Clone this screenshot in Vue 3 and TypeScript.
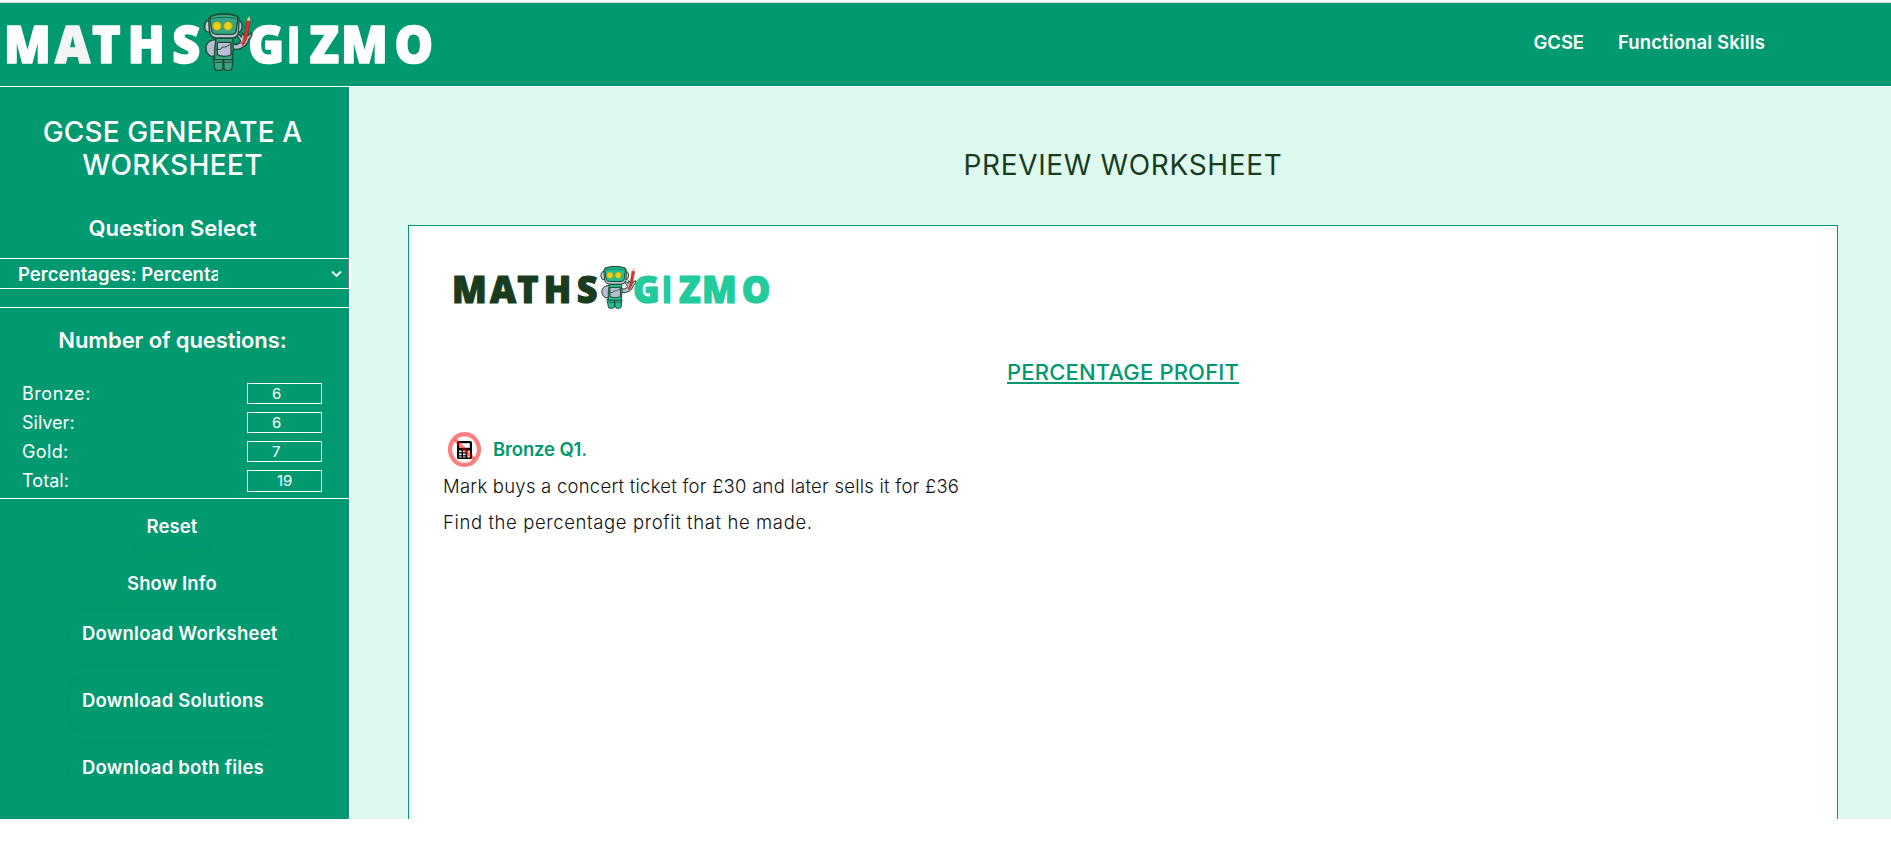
<script setup lang="ts">
import { computed, reactive } from 'vue'

interface Level {
  name: string
  count: number
  cls: string
}

const navLinks = [
  { label: 'GCSE', cls: 'nav-gcse' },
  { label: 'Functional Skills', cls: 'nav-skills' },
]

const levels = reactive<Level[]>([
  { name: 'Bronze:', count: 6, cls: 'bronze' },
  { name: 'Silver:', count: 6, cls: 'silver' },
  { name: 'Gold:', count: 7, cls: 'gold' },
])

const total = computed(() => levels.reduce((sum, l) => sum + l.count, 0))

const downloads = ['Download Worksheet', 'Download Solutions', 'Download both files']

function reset() {
  levels.forEach((l) => (l.count = 0))
}
</script>

<template>
  <div class="page">
    <svg class="defs" width="0" height="0" aria-hidden="true">
      <symbol id="robot" viewBox="0 0 440 75">
        <g transform="translate(190 5) scale(.3333)" stroke="#1f4a33" stroke-width="4" stroke-linejoin="round" stroke-linecap="round">
          <path d="M128 116 Q144 124 152 108 L144 96 Q138 86 146 88 L154 96 L156 84 L164 92 L172 80 L174 92 L184 84 Q190 90 176 104 Q172 120 160 126 Q146 136 128 132Z" fill="#b9bdd3" />
          <path d="M78 104 Q54 104 48 124 Q46 144 62 154 L78 152Z" fill="#b9bdd3" />
          <path d="M70 160 H99 V190 Q98 196 91 196 H79 Q74 196 74 190Z M101 160 H129 L126 190 Q125 196 119 196 H109 Q103 196 102 190Z" class="face" />
          <path d="M78 100 H128 Q132 130 126 164 H74 Q72 130 78 100Z" class="face" />
          <path d="M82 112 H123 V150 Q103 158 82 150Z" fill="#b9bdd3" />
          <path d="M80 133 L92 133 L97 126 H106 L122 118" fill="none" stroke-width="3" />
          <path d="M76 172 H98 M103 172 H127" fill="none" stroke-width="3" />
          <path d="M58 46 Q44 46 44 66 Q45 82 58 82Z M144 46 Q156 46 156 66 Q154 82 144 82Z" fill="#c7cbdc" />
          <path d="M62 34 Q102 20 142 34 Q147 37 147 48 L145 84 Q142 98 128 99 H78 Q64 98 60 84 L56 48 Q56 37 62 34Z" fill="#b9bdd3" />
          <path d="M62 34 Q102 20 142 34 L143 46 L138 80 Q136 87 126 88 H80 Q68 87 66 80 L60 46Z" class="face" />
          <path d="M66 41 Q102 32 138 41" fill="none" stroke="#16684d" stroke-width="3" />
          <circle cx="81" cy="63" r="13" fill="#ecd014" stroke="#9a9422" stroke-width="2" />
          <circle cx="114" cy="63" r="13" fill="#ecd014" stroke="#9a9422" stroke-width="2" />
          <path d="M156 116 L160 108 L170 46 L181 48 L170 102 L160 118Z" fill="#dc3322" stroke="#8d2a20" stroke-width="2" />
          <path d="M170 46 L178 32 L181 48Z" fill="#ead9a0" stroke="#a27a44" stroke-width="1" />
          <path d="M152 112 H158 V106 H162 V112 H167 V117 H162 V122 H156 V117 H152Z" fill="#d8394d" stroke="none" />
        </g>
      </symbol>
    </svg>

    <header class="topbar">
      <svg class="brand brand-light" viewBox="0 0 440 75">
        <g transform="scale(.95 1)">
          <text class="word word-a" y="63.4" x="4.2 58 96.8 134.5 181.4">M<tspan class="alt">A</tspan>THS</text>
          <text class="word word-b" y="63.4" x="261.2 302 325.8 359 415.2">G<tspan class="stem">I</tspan>ZMO</text>
        </g>
        <use href="#robot" width="440" height="75" />
      </svg>
      <nav class="nav">
        <a v-for="link in navLinks" :key="link.label" :class="link.cls">{{ link.label }}</a>
      </nav>
    </header>

    <div class="body">
      <aside class="sidebar">
        <h2 class="side-title">
          <span class="line-a">GCSE GENERATE A</span><br /><span class="line-b">WORKSHEET</span>
        </h2>
        <h3 class="side-heading select-heading">Question Select</h3>
        <div class="select">
          <span class="select-value">Percentages: Percentage Profit</span>
          <svg class="chevron" viewBox="0 0 10 7"><path d="M.9 1.2 5 5.2 9.1 1.2" fill="none" stroke="#fff" stroke-width="1.7" /></svg>
        </div>
        <section class="counts">
          <h3 class="side-heading count-heading">Number of questions:</h3>
          <div v-for="level in levels" :key="level.name" class="row">
            <span :class="level.cls">{{ level.name }}</span>
            <span class="box">{{ level.count }}</span>
          </div>
          <div class="row">
            <span class="total">Total:</span>
            <span class="box box-total">{{ total }}</span>
          </div>
        </section>
        <div class="actions">
          <button class="btn centre reset" type="button" @click="reset">Reset</button>
          <button class="btn centre info" type="button">Show Info</button>
          <button v-for="d in downloads" :key="d" class="btn download" type="button">{{ d }}</button>
        </div>
      </aside>

      <main class="preview">
        <h2 class="preview-title">PREVIEW WORKSHEET</h2>
        <article class="sheet">
          <svg class="brand brand-dark" viewBox="0 0 440 75">
            <g transform="scale(.95 1)">
              <text class="word word-a" y="63.4" x="4.2 58 96.8 134.5 181.4">MATHS</text>
              <text class="word word-b" y="63.4" x="261.2 302 325.8 359 415.2">G<tspan class="stem">I</tspan>ZMO</text>
            </g>
            <use href="#robot" width="440" height="75" />
          </svg>
          <h3 class="topic"><span>PERCENTAGE PROFIT</span></h3>
          <div class="q-head">
            <svg class="nocalc" viewBox="0 0 33 35">
              <rect x="9" y="9" width="15" height="18" rx="1.6" fill="#000" />
              <path d="M11.2 11.2h10.6v4.6H11.2z" fill="#fff" />
              <path d="M11 18.4h2.6v1.8H11zM15 18.4h2.6v1.8H15zM11 21.6h2.6v1.6H11zM15 21.6h2.6v1.6H15zM11 24.4h2.6v1.2H11zM15 24.4h2.6v1.2H15zM19.4 18.4h2.6v7.2h-2.6z" fill="#fff" />
              <g fill="none" stroke="#ff0000" stroke-opacity=".5" stroke-width="4.2">
                <path d="M16.5 2.1a14.4 15.4 0 1 0 .01 0z" />
                <path d="M7.4 7.9 25.7 27.1" stroke-width="3.6" />
              </g>
            </svg>
            <span class="q-label">Bronze Q1.</span>
          </div>
          <p class="q-text q-one">Mark buys a concert ticket for £30 and later sells it for £36</p>
          <p class="q-text q-two">Find the percentage profit that he made.</p>
        </article>
      </main>
    </div>
  </div>
</template>

<style>
body {
  margin: 0;
  background: #fff;
  overflow: hidden;
}
</style>

<style scoped>
.page {
  font-family: Inter, "Liberation Sans", sans-serif;
  color: #fff;
  height: 819px;
  padding-top: 2px;
  box-sizing: border-box;
  overflow: hidden;
}
.defs { position: absolute; }
h2, h3, p { margin: 0; }

.word {
  font-family: "Noto Sans", sans-serif;
  font-weight: 900;
  font-size: 51px;
  stroke-width: 1.6px;
  stroke-linejoin: round;
}
.stem {
  font-family: Inter, sans-serif;
  font-size: 50px;
  font-weight: 700;
}
.word-a { fill: var(--word-a); stroke: var(--word-a); }
.word-b { fill: var(--word-b); stroke: var(--word-b); }
.alt { fill: #f4f4f4; stroke: #f4f4f4; }
.face { fill: var(--face); }
.brand { display: block; flex: none; overflow: visible; }
.brand-light {
  --word-a: #fff;
  --word-b: #fff;
  --face: #37a583;
  width: 440px;
  height: 75px;
  margin-top: -3px;
}
.brand-dark {
  --word-a: #193c1e;
  --word-b: #22cb9c;
  --face: #1fc294;
  width: 326.5px;
  height: 55.7px;
  margin: 30px 0 0 40px;
}

.topbar {
  display: flex;
  justify-content: space-between;
  align-items: flex-start;
  height: 83px;
  border-top: 1px solid #d5d9dc;
  border-bottom: 1px solid #fff;
  background: #009970;
}
.nav {
  display: flex;
  gap: 34px;
  padding: 27px 126px 0 0;
  font-size: 18.5px;
  line-height: 24px;
  font-weight: 600;
}
.nav-gcse { letter-spacing: -.1px; }
.nav-skills { letter-spacing: .12px; }

.body { display: flex; height: 732px; }
.sidebar {
  width: 349px;
  flex: none;
  background: #009970;
}
.side-title {
  padding: 29px 4px 0 0;
  font-size: 28px;
  line-height: 33px;
  font-weight: 550;
  text-align: center;
}
.line-a { letter-spacing: .1px; }
.line-b { letter-spacing: .35px; }
.side-heading {
  font-size: 22px;
  line-height: 26px;
  padding-right: 4px;
  text-align: center;
}
.select-heading {
  margin: 33px 0 17px;
  font-weight: 570;
}
.select {
  display: flex;
  align-items: center;
  justify-content: space-between;
  height: 29px;
  padding: 0 6px 0 18px;
  border: solid #fff;
  border-width: 1px 0;
  border-right: 1px solid #777;
}
.select-value {
  width: 200px;
  overflow: hidden;
  white-space: nowrap;
  font-size: 18.5px;
  font-weight: 600;
}
.chevron { width: 11px; height: 8px; }
.counts {
  margin-top: 18px;
  padding-bottom: 3px;
  border: solid #fff;
  border-width: 1px 0;
}
.count-heading {
  margin: 19px 0 26px;
  font-weight: 600;
  letter-spacing: -.1px;
}
.row {
  display: flex;
  align-items: center;
  justify-content: space-between;
  height: 29px;
  padding: 0 27px 0 22px;
  font-size: 18px;
  line-height: 29px;
}
.bronze { letter-spacing: .55px; }
.silver { letter-spacing: 0; }
.gold { letter-spacing: .35px; }
.total { letter-spacing: .06px; }
.box {
  box-sizing: border-box;
  width: 75px;
  height: 21px;
  padding-left: 24px;
  border: 1px solid #fff;
  font-size: 15px;
  line-height: 19px;
}
.box-total {
  height: 22px;
  padding-left: 29px;
  line-height: 20px;
}

.actions {
  display: flex;
  flex-direction: column;
  align-items: flex-start;
  padding-top: 5px;
}
.btn {
  height: 44px;
  padding: 0 9px;
  border: 0;
  border-radius: 10px;
  background: #009970;
  box-shadow: 0 4px 9px rgba(20, 160, 70, .2);
  color: #fff;
  font: 600 18.5px/24px Inter, "Liberation Sans", sans-serif;
  letter-spacing: .22px;
}
.centre {
  align-self: center;
  margin-right: 5px;
  letter-spacing: .1px;
}
.reset { margin-bottom: 13px; }
.info { margin-bottom: 6px; }
.download {
  margin-left: 73px;
  margin-bottom: 23px;
}

.preview {
  flex: 1;
  margin-left: 2px;
  padding: 62px 53px 0 57px;
  background: #def9f0;
  overflow: hidden;
}
.preview-title {
  margin-bottom: 43px;
  color: #193c1e;
  font-size: 28px;
  line-height: 33px;
  font-weight: 400;
  letter-spacing: .65px;
  text-align: center;
}
.sheet {
  height: 700px;
  border: 1px solid #009970;
  background: #fff;
  color: #111;
  overflow: hidden;
}
.topic {
  margin-top: 47px;
  color: #009970;
  font-size: 22px;
  line-height: 26px;
  font-weight: 500;
  letter-spacing: .17px;
  text-align: center;
}
.topic span {
  text-decoration: underline;
  text-decoration-thickness: 2px;
  text-underline-offset: 2px;
  text-decoration-skip-ink: none;
}
.q-head {
  display: flex;
  align-items: center;
  gap: 12px;
  height: 36px;
  margin-top: 47px;
  padding-left: 39px;
}
.nocalc { width: 33px; height: 35px; }
.q-label {
  margin-top: -2px;
  color: #009970;
  font-size: 18.5px;
  font-weight: 600;
  letter-spacing: -.15px;
}
.q-text {
  padding-left: 34px;
  font-size: 18.5px;
  line-height: 36px;
  font-weight: 300;
}
.q-one { letter-spacing: .24px; }
.q-two { letter-spacing: .61px; }
</style>
